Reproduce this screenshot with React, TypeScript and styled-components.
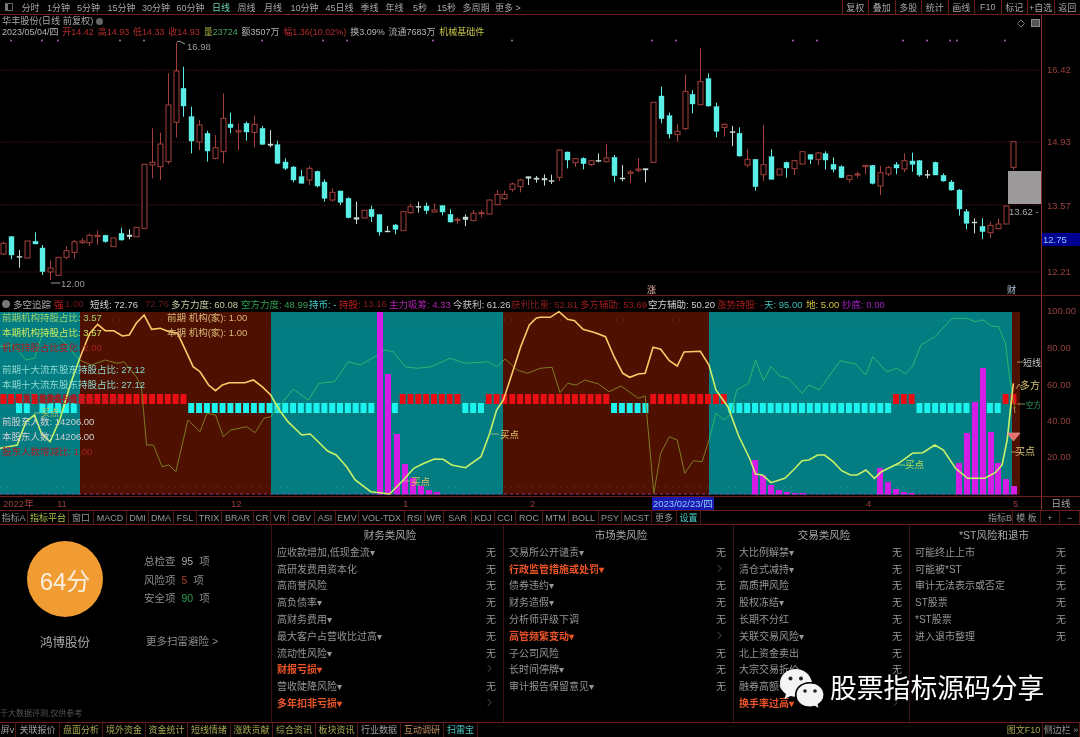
import React from 'react';
import styled, { createGlobalStyle } from 'styled-components';
import { ChevronRight } from 'lucide-react';

const GlobalStyle = createGlobalStyle`
    * {
        box-sizing: border-box;
    }
    html, body {
        margin: 0;
        padding: 0;
        background: #000;
    }
    body {
        font-family: "Liberation Sans", "Noto Sans CJK SC", sans-serif;
    }
`;

const LINE = '#6e1c1c';
const AXIS_TEXT = '#97403c';

const Page = styled.div`
    width: 1080px;
    height: 737px;
    position: relative;
    display: flex;
    flex-direction: column;
    overflow: hidden;
    background: #000;
    color: #b0b0b0;
    filter: blur(0.45px);
`;

const TopBar = styled.div`
    height: 15px;
    flex: none;
    display: flex;
    align-items: center;
    justify-content: space-between;
    border-bottom: 1px solid ${LINE};
`;

const TopGroup = styled.div`
    display: flex;
    align-items: center;
    height: 100%;
`;

const WindowIcon = styled.div`
    width: 8px;
    height: 8px;
    margin: 0 4px 0 5px;
    border: 1px solid #666;
    border-left: 3px solid #777;
`;

const TopItem = styled.div<{ $w: number; $color?: string }>`
    width: ${(p) => p.$w}px;
    text-align: center;
    font-size: 9px;
    color: ${(p) => p.$color || '#a6a6a6'};
    white-space: nowrap;
`;

const TopButton = styled.div`
    width: 26.5px;
    height: 100%;
    display: flex;
    align-items: center;
    justify-content: center;
    font-size: 9px;
    color: #a6a6a6;
    white-space: nowrap;
    border-left: 1px solid ${LINE};
`;

const PriceSection = styled.div`
    height: 281px;
    flex: none;
    display: flex;
    border-bottom: 1px solid ${LINE};
`;

const ChartPane = styled.div`
    position: relative;
    width: 1041px;
    flex: none;
`;

const ChartSvg = styled.svg`
    display: block;
`;

const QuoteInfo = styled.div`
    position: absolute;
    top: 0;
    left: 2px;
    font-size: 9px;
    line-height: 10px;
`;

const StockName = styled.div`
    display: flex;
    align-items: center;
    gap: 3px;
    height: 12px;
    font-size: 9.2px;
    color: #a8a8a8;
`;

const DropDot = styled.span`
    width: 7px;
    height: 7px;
    border-radius: 50%;
    background: #666;
`;

const QuoteLine = styled.div`
    display: flex;
    height: 10px;
    white-space: nowrap;
    gap: 3.8px;
`;

const Quote = styled.span<{ $color?: string }>`
    color: ${(p) => p.$color || '#b4b4b4'};
`;

const AxisColumn = styled.div`
    position: relative;
    flex: 1;
    border-left: 1px solid #88302e;
`;

const AxisTick = styled.div<{ $top: number }>`
    position: absolute;
    top: ${(p) => p.$top}px;
    left: 5px;
    font-size: 9.5px;
    line-height: 12px;
    color: ${AXIS_TEXT};
`;

const PriceTag = styled.div<{ $top: number }>`
    position: absolute;
    top: ${(p) => p.$top}px;
    left: 0;
    right: 0;
    height: 13px;
    background: #000090;
    color: #8cc8ff;
    font-size: 9.5px;
    line-height: 13px;
    padding-left: 1px;
`;

const IndicatorSection = styled.div`
    height: 200px;
    flex: none;
    display: flex;
`;

const IndicatorHeader = styled.div`
    height: 15px;
    display: flex;
    align-items: center;
    font-size: 9.5px;
    white-space: nowrap;
    padding-left: 2px;
`;

const HeaderIcon = styled.span`
    width: 8px;
    height: 8px;
    margin-right: 3px;
    border-radius: 50%;
    background: #777;
    flex: none;
`;

const HeaderStat = styled.span<{ $w: number; $color: string }>`
    width: ${(p) => p.$w}px;
    flex: none;
    color: ${(p) => p.$color};
`;

const LegendOverlay = styled.div<{ $left: number }>`
    position: absolute;
    top: 14px;
    left: ${(p) => p.$left}px;
    font-size: 9.5px;
    white-space: nowrap;
`;

const LegendLine = styled.div<{ $color: string; $gap?: number }>`
    height: 15px;
    line-height: 15px;
    margin-top: ${(p) => p.$gap || 0}px;
    color: ${(p) => p.$color};
`;

const TimeAxis = styled.div`
    height: 15px;
    flex: none;
    display: flex;
    border-top: 1px solid ${LINE};
    border-bottom: 1px solid ${LINE};
    font-size: 9.5px;
    line-height: 13px;
`;

const TimeTrack = styled.div`
    position: relative;
    width: 1041px;
    flex: none;
    color: ${AXIS_TEXT};
`;

const TimeMark = styled.span<{ $left: number }>`
    position: absolute;
    left: ${(p) => p.$left}px;
    top: 0;
`;

const CursorDate = styled(TimeMark)`
    background: #1a1ab0;
    color: #8cc8ff;
    height: 13px;
    padding: 0 1px;
`;

const PeriodCell = styled.div`
    flex: 1;
    text-align: center;
    color: #a6a6a6;
    border-left: 1px solid #88302e;
`;

const TabBar = styled.div<{ $h: number }>`
    height: ${(p) => p.$h}px;
    flex: none;
    display: flex;
    justify-content: space-between;
    font-size: 9px;
    line-height: ${(p) => p.$h}px;
    border-bottom: 1px solid ${LINE};
`;

const BottomTabBar = styled(TabBar)`
    border-bottom: none;
    border-top: 1px solid ${LINE};
`;

const TabGroup = styled.div`
    display: flex;
`;

const Tab = styled.div<{ $w: number; $color?: string }>`
    width: ${(p) => p.$w}px;
    flex: none;
    text-align: center;
    white-space: nowrap;
    overflow: hidden;
    color: ${(p) => p.$color || '#989898'};
    border-right: 1px solid #4f1616;
`;

const ScanPanel = styled.div`
    flex: 1;
    display: flex;
    min-height: 0;
`;

const SummaryPanel = styled.div`
    width: 272px;
    flex: none;
    display: flex;
    flex-direction: column;
    border-right: 1px solid #3a1212;
`;

const SummaryBody = styled.div`
    display: flex;
`;

const ScoreBlock = styled.div`
    width: 130px;
    flex: none;
    display: flex;
    flex-direction: column;
    align-items: center;
    padding-top: 16px;
`;

const ScoreCircle = styled.div`
    width: 76px;
    height: 76px;
    border-radius: 50%;
    background: #f09c32;
    color: #fbeedd;
    display: flex;
    align-items: center;
    justify-content: center;
    font-size: 24px;
`;

const ScoreName = styled.div`
    margin-top: 15px;
    font-size: 12.5px;
    color: #a8a8a8;
`;

const StatsBlock = styled.div`
    padding: 27px 0 0 14px;
    font-size: 10.5px;
    color: #8e8e8e;
`;

const StatRow = styled.div`
    display: flex;
    gap: 6px;
    height: 18.6px;
    line-height: 18px;
`;

const StatValue = styled.span<{ $color: string }>`
    color: ${(p) => p.$color};
`;

const MoreLink = styled.div`
    margin: 25px 0 0 2px;
    font-size: 10.5px;
    color: #8e8e8e;
`;

const Footnote = styled.div`
    margin-top: auto;
    margin-bottom: 3px;
    height: 11px;
    font-size: 8px;
    line-height: 11px;
    color: #555;
    white-space: nowrap;
`;

const RiskColumn = styled.div<{ $w: number; $last?: boolean }>`
    width: ${(p) => p.$w}px;
    flex: none;
    padding: 2px 0 0 5px;
    border-right: ${(p) => (p.$last ? 'none' : '1px solid #3a1212')};
`;

const RiskTitle = styled.div`
    height: 16px;
    line-height: 16px;
    text-align: center;
    font-size: 10.5px;
    color: #a8a8a8;
`;

const RiskRow = styled.div`
    height: 16.8px;
    display: flex;
    align-items: center;
    justify-content: space-between;
    padding-right: 7px;
    font-size: 10px;
    color: #969696;
    white-space: nowrap;
`;

const RiskName = styled.span<{ $hot?: boolean }>`
    color: ${(p) => (p.$hot ? '#ec5428' : '#969696')};
    font-weight: ${(p) => (p.$hot ? 700 : 400)};
`;

const Watermark = styled.div`
    position: absolute;
    left: 780px;
    top: 667px;
    display: flex;
    align-items: center;
    gap: 6px;
    color: #fff;
    font-size: 26.8px;
    line-height: 40px;
    white-space: nowrap;
    text-shadow: 0 0 4px #000, 0 0 4px #000;
`;

const WatermarkText = styled.span`
    padding-top: 2px;
`;

type Candle = [string, number, number, number, number];

// kind, high, body top, body bottom, low: measured on a 3x crop, y = v / 3 + 40
const candles: Candle[] = [
    ['r', 605, 610, 642, 645], ['c', 588, 590, 645, 658], ['w', 630, 649, 651, 683], ['r', 603, 603, 654, 654],
    ['c', 577, 604, 612, 612], ['c', 615, 624, 695, 705], ['r', 662, 684, 696, 720], ['r', 652, 652, 706, 706],
    ['r', 618, 632, 652, 658], ['r', 600, 605, 637, 655], ['r', 595, 603, 608, 612], ['r', 580, 586, 608, 618],
    ['r', 572, 586, 590, 615], ['c', 584, 586, 605, 608], ['r', 594, 594, 620, 620], ['c', 563, 580, 600, 602],
    ['w', 568, 585, 590, 598], ['r', 562, 562, 590, 590], ['r', 373, 373, 565, 565], ['r', 265, 367, 375, 415],
    ['r', 278, 312, 380, 420], ['r', 100, 195, 365, 372], ['r', 8, 93, 247, 292], ['c', 80, 145, 198, 230],
    ['c', 200, 230, 303, 340], ['r', 240, 255, 306, 330], ['c', 272, 280, 333, 365], ['r', 285, 323, 355, 358],
    ['r', 160, 235, 335, 370], ['c', 218, 252, 263, 280], ['r', 250, 272, 276, 330], ['c', 245, 250, 276, 302],
    ['r', 226, 253, 277, 322], ['c', 258, 265, 313, 315], ['w', 270, 312, 316, 322], ['c', 302, 314, 370, 372],
    ['c', 355, 366, 385, 390], ['c', 378, 381, 420, 427], ['c', 390, 410, 430, 430], ['r', 378, 385, 420, 435],
    ['c', 392, 394, 438, 442], ['c', 418, 426, 475, 485], ['r', 445, 457, 480, 485], ['c', 452, 453, 487, 495],
    ['c', 472, 475, 533, 535], ['w', 485, 533, 538, 552], ['r', 511, 511, 534, 534], ['c', 497, 508, 530, 546],
    ['c', 522, 524, 576, 587], ['w', 558, 573, 575, 575], ['c', 552, 555, 568, 583], ['r', 515, 515, 572, 572],
    ['r', 492, 500, 518, 522], ['w', 485, 499, 502, 518], ['c', 488, 498, 512, 522], ['r', 490, 510, 516, 518],
    ['c', 495, 497, 516, 526], ['c', 508, 523, 546, 548], ['r', 532, 538, 540, 552], ['w', 523, 531, 539, 558],
    ['r', 510, 520, 542, 542], ['r', 510, 518, 521, 532], ['r', 480, 480, 522, 522], ['r', 450, 463, 494, 495],
    ['r', 452, 463, 476, 480], ['r', 428, 432, 448, 455], ['r', 416, 420, 440, 457], ['w', 410, 410, 415, 435],
    ['w', 408, 414, 418, 428], ['w', 403, 415, 420, 437], ['w', 404, 422, 425, 432], ['r', 328, 330, 412, 423],
    ['c', 335, 336, 360, 385], ['r', 354, 356, 368, 380], ['c', 352, 355, 371, 388], ['r', 360, 362, 374, 378],
    ['w', 340, 361, 363, 367], ['r', 312, 354, 365, 367], ['c', 345, 352, 407, 426], ['w', 375, 414, 417, 424],
    ['r', 390, 396, 400, 430], ['r', 354, 387, 391, 397], ['w', 385, 386, 390, 427], ['r', 187, 187, 367, 367],
    ['c', 140, 168, 236, 250], ['c', 218, 227, 282, 295], ['r', 252, 274, 284, 305], ['r', 103, 154, 266, 270],
    ['c', 150, 163, 192, 220], ['r', 25, 125, 194, 195], ['c', 100, 116, 198, 200], ['c', 188, 200, 274, 292],
    ['r', 250, 253, 262, 290], ['w', 258, 275, 278, 318], ['c', 262, 280, 348, 350], ['r', 328, 358, 375, 382],
    ['c', 358, 358, 440, 452], ['r', 255, 374, 404, 423], ['c', 328, 350, 418, 418], ['r', 387, 387, 405, 405],
    ['c', 365, 367, 384, 413], ['r', 360, 362, 386, 405], ['r', 335, 335, 372, 372], ['c', 342, 344, 358, 372],
    ['r', 335, 339, 358, 375], ['c', 334, 341, 360, 388], ['c', 352, 373, 388, 397], ['c', 376, 380, 413, 415],
    ['r', 405, 407, 418, 428], ['r', 395, 402, 405, 413], ['r', 375, 376, 380, 403], ['c', 375, 376, 430, 433],
    ['r', 378, 398, 438, 465], ['r', 378, 383, 402, 408], ['c', 366, 374, 384, 403], ['r', 340, 362, 387, 396],
    ['c', 338, 363, 373, 395], ['c', 360, 362, 405, 410], ['w', 390, 403, 405, 415], ['c', 365, 367, 405, 405],
    ['c', 400, 406, 423, 425], ['c', 420, 426, 450, 452], ['c', 447, 450, 507, 527], ['c', 507, 515, 550, 568],
    ['w', 535, 546, 549, 580], ['c', 535, 559, 575, 597], ['r', 545, 556, 578, 593], ['r', 535, 552, 566, 568],
    ['r', 498, 498, 552, 552], ['r', 305, 305, 382, 390],
];

const candleX = (i: number) => 3.33 + 7.83 * i;
const WICK = { r: '#a5403c', c: '#5aeee6', w: '#c8dcd6' } as Record<string, string>;

const signalDots = [11, 42, 58, 120, 144, 262, 323, 347, 433, 512, 652, 676, 793, 817, 903, 927, 950, 957, 1005];
const gridLevels = [70, 142, 205, 272];

const PriceChart: React.FC = () => (
    <ChartSvg width={1041} height={280} viewBox="0 15 1041 280">
        {gridLevels.map((y) => (
            <line key={y} x1={0} x2={1041} y1={y} y2={y} stroke="#3a1214" strokeDasharray="2 1" />
        ))}
        {signalDots.map((x) => (
            <circle key={x} cx={x} cy={40.5} r={1} fill="#b060b8" />
        ))}
        {candles.map(([kind, high, top, bottom, low], i) => {
            const x = Math.round(candleX(i)) + 0.5;
            const y1 = top / 3 + 40;
            const y2 = bottom / 3 + 40;
            const solid = kind !== 'r';
            return (
                <g key={i}>
                    <line x1={x} x2={x} y1={high / 3 + 40} y2={low / 3 + 40} stroke={WICK[kind]} />
                    <rect
                        x={x - 2.5}
                        y={y1}
                        width={5}
                        height={Math.max(y2 - y1, 1)}
                        fill={solid ? WICK[kind] : '#000'}
                        stroke={WICK[kind]}
                        strokeWidth={kind === 'r' ? 1 : 0.4}
                    />
                </g>
            );
        })}
        <path d="M177 42l2-1 6 3" fill="none" stroke="#999" />
        <text x={187} y={50} fontSize={9.5} fill="#9a9a9a">16.98</text>
        <path d="M51 283h9" fill="none" stroke="#999" />
        <text x={61} y={287} fontSize={9.5} fill="#9a9a9a">12.00</text>
        <rect x={1008} y={171} width={33} height={33} fill="#9c9a9a" />
        <text x={1009} y={215} fontSize={9.5} fill="#a8a8a8">13.62 -</text>
        <path d="M1021 20l3.5 3.5-3.5 3.500-3.500-3.500z" fill="none" stroke="#777" />
        <rect x={1031.500} y={19.500} width={8} height={7} fill="#555" stroke="#888" />
        <text x={647} y={293} fontSize={9} fill="#e8b0a8">涨</text>
        <text x={1007} y={293} fontSize={9} fill="#b8c8e0">财</text>
    </ChartSvg>
);

const sections: [number, number, string][] = [
    [0, 80, '#037c82'],
    [80, 271, '#4e1000'],
    [271, 503, '#037c82'],
    [503, 709, '#4e1000'],
    [709, 1012, '#037c82'],
    [1012, 1020, '#4e1000'],
];

const redRanges: [number, number][] = [[1, 78], [80, 186], [401, 461], [487, 609], [650, 727], [893, 916], [1004, 1017]];
const cyanRanges: [number, number][] = [[17, 29], [41, 77], [189, 375], [393, 399], [463, 484], [612, 649], [729, 892], [918, 971], [987, 1002]];

const inRanges = (x: number, ranges: [number, number][]) => ranges.some(([a, b]) => x >= a - 1 && x <= b + 1);

// traced from crops that are 2.9x wide and 3x high
const trace = (left: number[], right: number[]) => {
    const out: string[] = [];
    for (let i = 0; i < left.length; i += 2) out.push(`${(left[i] / 2.9).toFixed(1)},${(left[i + 1] / 3 + 290).toFixed(1)}`);
    for (let i = 0; i < right.length; i += 2) out.push(`${(540 + right[i] / 2.9).toFixed(1)},${(right[i + 1] / 3 + 290).toFixed(1)}`);
    return out.join(' ');
};

const shortLine = trace(
    [0, 475, 50, 465, 75, 395, 100, 375, 120, 430, 145, 455, 175, 385, 205, 280, 235, 195, 260, 130, 283, 103, 305, 122, 330, 122, 355, 138, 375, 135, 395, 100, 418, 75, 440, 118, 465, 115, 490, 125, 515, 130, 540, 185, 560, 230, 580, 245, 605, 285, 625, 302, 645, 285, 665, 278, 710, 278, 735, 270, 760, 290, 785, 315, 810, 360, 835, 395, 875, 435, 900, 432, 950, 483, 975, 495, 1005, 530, 1030, 570, 1075, 605, 1130, 612, 1170, 570, 1200, 535, 1230, 520, 1260, 507, 1285, 508, 1310, 525, 1350, 533, 1395, 500, 1420, 430, 1440, 360, 1460, 330, 1490, 235, 1510, 170, 1535, 105, 1555, 85],
    [0, 82, 30, 82, 55, 65, 80, 88, 100, 92, 125, 118, 160, 128, 190, 140, 215, 200, 240, 250, 260, 262, 285, 252, 305, 250, 328, 172, 350, 178, 375, 212, 398, 228, 418, 186, 465, 184, 490, 225, 510, 300, 545, 350, 575, 435, 610, 510, 625, 552, 645, 555, 670, 578, 710, 565, 735, 540, 760, 512, 780, 510, 805, 495, 825, 495, 850, 515, 875, 542, 900, 555, 920, 555, 945, 540, 970, 565, 990, 545, 1040, 520, 1080, 490, 1110, 488, 1145, 465, 1170, 480, 1205, 535, 1240, 565, 1290, 565, 1320, 548, 1340, 525, 1355, 450, 1365, 350, 1373, 280]
);

const bearLine = trace(
    [0, 170, 40, 165, 75, 210, 100, 205, 120, 140, 150, 125, 185, 155, 230, 210, 265, 225, 305, 210, 340, 220, 360, 215, 395, 260, 410, 290, 425, 465, 445, 465, 470, 530, 490, 525, 510, 545, 545, 390, 580, 425, 600, 370, 625, 375, 648, 440, 670, 420, 715, 410, 740, 428, 765, 385, 785, 380, 820, 335, 850, 298, 895, 330, 925, 280, 970, 275, 1010, 215, 1045, 225, 1095, 195, 1115, 180, 1140, 185, 1175, 230, 1210, 235, 1250, 230, 1305, 205, 1350, 220, 1415, 215, 1440, 230, 1465, 207, 1500, 240, 1530, 250],
    [0, 235, 35, 232, 58, 308, 80, 280, 105, 285, 130, 270, 170, 282, 200, 305, 235, 288, 285, 325, 305, 318, 330, 610, 350, 490, 375, 440, 398, 450, 420, 550, 445, 512, 470, 515, 490, 450, 510, 370, 535, 390, 555, 370, 570, 300, 605, 280, 625, 210, 648, 272, 670, 230, 695, 258, 720, 265, 760, 310, 780, 285, 810, 300, 870, 212, 915, 222, 945, 255, 965, 200, 1005, 245, 1035, 235, 1060, 252, 1080, 230, 1105, 165, 1145, 140, 1195, 85, 1240, 85, 1260, 95, 1285, 90, 1310, 108, 1330, 110, 1350, 160, 1360, 250, 1373, 330, 1378, 355]
);

const bars: [number, number][] = [
    [377, 312], [385, 374], [394, 434], [402, 464], [410, 478], [418, 486], [426, 490], [434, 492],
    [752, 460], [760, 475], [768, 485], [776, 490], [784, 492], [792, 493], [800, 493],
    [877, 468], [885, 482], [893, 489], [901, 492], [909, 493],
    [956, 463], [964, 433], [972, 402], [980, 368], [988, 432], [995, 463], [1003, 479], [1011, 486],
];

const gradientStops = (inTeal: string, inRed: string) =>
    sections.flatMap(([a, b, fill], i) => {
        const color = fill === '#037c82' ? inTeal : inRed;
        return [
            <stop key={`a${i}`} offset={a / 1041} stopColor={color} />,
            <stop key={`b${i}`} offset={b / 1041} stopColor={color} />,
        ];
    });

const IndicatorChart: React.FC = () => (
    <ChartSvg width={1041} height={185} viewBox="0 311 1041 185">
        <defs>
            <linearGradient id="shortStroke" gradientUnits="userSpaceOnUse" x1={0} x2={1041} y1={0} y2={0}>
                {gradientStops('#c8f268', '#ffc868')}
            </linearGradient>
            <linearGradient id="bearStroke" gradientUnits="userSpaceOnUse" x1={0} x2={1041} y1={0} y2={0}>
                {gradientStops('#26b870', '#7c7a22')}
            </linearGradient>
        </defs>
        {sections.map(([a, b, fill]) => (
            <rect key={a} x={a} y={312} width={b - a} height={182.500} fill={fill} />
        ))}
        <line x1={0} x2={1012} y1={320} y2={320} stroke="#ffffff" strokeOpacity={0.18} strokeDasharray="1 6" />
        <line x1={0} x2={1012} y1={487} y2={487} stroke="#ffffff" strokeOpacity={0.18} strokeDasharray="1 6" />
        <line x1={0} x2={1012} y1={494} y2={494} stroke="#c040c0" strokeOpacity={0.7} strokeDasharray="3 3" />
        {Array.from({ length: 131 }, (_, i) => {
            const x = candleX(i);
            const red = inRanges(x, redRanges);
            const cyan = !red && inRanges(x, cyanRanges);
            const showCyan = cyan || inRanges(x, cyanRanges.slice(0, 2));
            // the first stretch is half hidden behind a legend line
            const dim = x > 20 && x < 78 && Math.abs(x - 35) > 4;
            return (
                <g key={i}>
                    {red && <rect x={x - 3} y={394} width={6} height={10} rx={dim ? 2 : 0} fill={dim ? '#8a2a30' : '#e80e14'} />}
                    {showCyan && <rect x={x - 3} y={403} width={6} height={10} fill="#1cf2ee" />}
                </g>
            );
        })}
        <polyline points={bearLine} fill="none" stroke="url(#bearStroke)" strokeWidth={1} />
        {bars.map(([x, top]) => (
            <rect key={x} x={x} y={top} width={6} height={494.500 - top} fill="#d41ee6" />
        ))}
        <polyline points={shortLine} fill="none" stroke="url(#shortStroke)" strokeWidth={1.6} />
        <path d="M1007 433h13l-6.500 8z" fill="#e8706c" stroke="#f0b0b0" strokeWidth={0.6} />
        <path d="M1017 362h6M1016 389l3-5 3 5M1014 407l1 6M1017 404h8M1011 452h5M491 434h8M402 481h8M34 413h6" fill="none" stroke="#c8c878" strokeWidth={0.7} />
        <path d="M896 465h9" fill="none" stroke="#c8f268" strokeWidth={0.7} />
        <text x={1023} y={366} fontSize={9} fill="#c8c8c8">短线</text>
        <text x={1020} y={389} fontSize={10} fill="#d8c070">多方</text>
        <text x={1026} y={408} fontSize={7.500} fill="#30a060">空方</text>
        <text x={1015} y={455} fontSize={10} fill="#d8c070">买点</text>
        <text x={905} y={468} fontSize={9.5} fill="#b8d860">买点</text>
        <text x={500} y={438} fontSize={9.5} fill="#d8c060">买点</text>
        <text x={411} y={485} fontSize={9.5} fill="#d8c060">买点</text>
        <text x={41} y={416} fontSize={9} fill="#b8c860">买点</text>
    </ChartSvg>
);

const topItems: [string, number, string?][] = [
    ['分时', 27], ['1分钟', 29], ['5分钟', 31], ['15分钟', 35], ['30分钟', 34], ['60分钟', 35], ['日线', 26, '#6fd0b8'],
    ['周线', 25], ['月线', 28], ['10分钟', 35], ['45日线', 35], ['季线', 25], ['年线', 25], ['5秒', 26], ['15秒', 27],
    ['多周期', 32], ['更多 >', 32],
];
const topButtons = ['复权', '叠加', '多股', '统计', '画线', 'F10', '标记', '+自选', '返回'];

const headerStats: [string, number, string][] = [
    ['多空追踪', 41, '#a8a8a8'], ['强', 11, '#d02020'], ['1.00', 25, '#701818'], ['短线: 72.76', 55, '#d0d0d0'], ['72.76', 26, '#6a1c1c'],
    ['多方力度: 60.08', 70, '#c8c8a0'], ['空方力度: 48.99', 68, '#30a050'], ['持币: -', 30, '#40d0d0'], ['持股:', 24, '#c02020'],
    ['13.16', 26, '#8c1c1c'], ['主力吸筹: 4.33', 64, '#b020b0'], ['今获利: 61.26', 58, '#c8c8c8'], ['获利比重: 52.81', 69, '#8c1c1c'],
    ['多方辅助: 53.69', 68, '#a01c1c'], ['空方辅助: 50.20', 69, '#d0d0d0'], ['涨势持股: -', 47, '#a81c1c'], ['天: 95.00', 42, '#40c0b8'],
    ['地: 5.00', 36, '#d0c040'], ['抄底: 0.00', 46, '#a020c0'],
];

const legendLeft: [string, string, number?][] = [
    ['前期机构持股占比: 3.57', '#9cd070'],
    ['本期机构持股占比: 3.57', '#c8e860'],
    ['机构持股占比变化: 2.00', '#a82020'],
    ['前期十大流东股东持股占比: 27.12', '#8cd8d0', 7],
    ['本期十大流东股东持股占比: 27.12', '#8cd8d0'],
    ['十大流东股东占比变化: 0.00', '#a82020'],
    ['前股东人数: 14206.00', '#d0d0d0', 7],
    ['本股东人数: 14206.00', '#d0d0d0'],
    ['股东人数增减比: 1.00', '#a82020'],
];

const indicatorTabs: [string, number, string?][] = [
    ['指标A', 28], ['指标平台', 41, '#b0c050'], ['窗口', 25], ['MACD', 33], ['DMI', 22], ['DMA', 25], ['FSL', 23], ['TRIX', 25], ['BRAR', 32],
    ['CR', 17], ['VR', 18], ['OBV', 26], ['ASI', 21], ['EMV', 23], ['VOL-TDX', 46], ['RSI', 20], ['WR', 19], ['SAR', 28], ['KDJ', 23], ['CCI', 21],
    ['ROC', 27], ['MTM', 26], ['BOLL', 30], ['PSY', 23], ['MCST', 30], ['更多', 25], ['设置', 24, '#50d0c8'],
];
const indicatorTabsRight: [string, number][] = [['指标B', 25], ['模 板', 28], ['+', 19], ['−', 20]];

const bottomTabs: [string, number, string?][] = [
    ['屏v', 16, '#a0a0a0'], ['关联报价', 44, '#a0a0a0'], ['盘面分析', 43, '#a8a850'], ['境外资金', 43, '#a8a850'], ['资金统计', 42, '#a8a850'],
    ['短线情绪', 43, '#a8a850'], ['涨跌贡献', 42, '#a8a850'], ['综合资讯', 43, '#a8a850'], ['板块资讯', 42, '#a8a850'], ['行业数据', 43, '#a0a0a0'],
    ['互动调研', 43, '#c09060'], ['扫雷宝', 34, '#50d0c8'],
];

// name, flagged as a risk, value hidden behind the watermark
type Risk = [string, boolean?, boolean?];
const riskColumns: { title: string; width: number; items: Risk[] }[] = [
    {
        title: '财务类风险',
        width: 232,
        items: [
            ['应收款增加,低现金流▾'], ['高研发费用资本化'], ['高商誉风险'], ['高负债率▾'], ['高财务费用▾'],
            ['最大客户占营收比过高▾'], ['流动性风险▾'], ['财报亏损▾', true], ['营收陡降风险▾'], ['多年扣非亏损▾', true],
        ],
    },
    {
        title: '市场类风险',
        width: 230,
        items: [
            ['交易所公开谴责▾'], ['行政监管措施或处罚▾', true], ['债券违约▾'], ['财务造假▾'], ['分析师评级下调'],
            ['高管频繁变动▾', true], ['子公司风险'], ['长时间停牌▾'], ['审计报告保留意见▾'],
        ],
    },
    {
        title: '交易类风险',
        width: 176,
        items: [
            ['大比例解禁▾'], ['清仓式减持▾'], ['高质押风险'], ['股权冻结▾'], ['长期不分红'],
            ['关联交易风险▾'], ['北上资金卖出'], ['大宗交易折价'], ['融券高额▾', false, true], ['换手率过高▾', true],
        ],
    },
    {
        title: '*ST风险和退市',
        width: 163,
        items: [['可能终止上市'], ['可能被*ST'], ['审计无法表示或否定'], ['ST股票'], ['*ST股票'], ['进入退市整理']],
    },
];

const App: React.FC = () => (
    <Page>
        <GlobalStyle />
        <TopBar>
            <TopGroup>
                <WindowIcon />
                {topItems.map(([label, w, color]) => (
                    <TopItem key={label} $w={w} $color={color}>{label}</TopItem>
                ))}
            </TopGroup>
            <TopGroup>
                {topButtons.map((label) => (
                    <TopButton key={label}>{label}</TopButton>
                ))}
            </TopGroup>
        </TopBar>

        <PriceSection>
            <ChartPane>
                <PriceChart />
                <QuoteInfo>
                    <StockName>华丰股份(日线 前复权) <DropDot /></StockName>
                    <QuoteLine>
                        <Quote>2023/05/04/四</Quote>
                        <Quote $color="#b02a2a">开14.42</Quote>
                        <Quote $color="#b02a2a">高14.93</Quote>
                        <Quote $color="#b02a2a">低14.33</Quote>
                        <Quote $color="#b02a2a">收14.93</Quote>
                        <Quote $color="#a0a840">量<Quote $color="#48a068">23724</Quote></Quote>
                        <Quote>额3507万</Quote>
                        <Quote $color="#b02a2a">幅1.36(10.02%)</Quote>
                        <Quote>换3.09%</Quote>
                        <Quote>流通7683万</Quote>
                        <Quote $color="#c8c850">机械基础件</Quote>
                    </QuoteLine>
                </QuoteInfo>
            </ChartPane>
            <AxisColumn>
                <AxisTick $top={49}>16.42</AxisTick>
                <AxisTick $top={121}>14.93</AxisTick>
                <AxisTick $top={185}>13.57</AxisTick>
                <PriceTag $top={218}>12.75</PriceTag>
                <AxisTick $top={251}>12.21</AxisTick>
            </AxisColumn>
        </PriceSection>

        <IndicatorSection>
            <ChartPane>
                <IndicatorHeader>
                    <HeaderIcon />
                    {headerStats.map(([label, w, color]) => (
                        <HeaderStat key={label} $w={w} $color={color}>{label}</HeaderStat>
                    ))}
                </IndicatorHeader>
                <IndicatorChart />
                <LegendOverlay $left={2}>
                    {legendLeft.map(([label, color, gap]) => (
                        <LegendLine key={label} $color={color} $gap={gap}>{label}</LegendLine>
                    ))}
                </LegendOverlay>
                <LegendOverlay $left={167}>
                    <LegendLine $color="#d8b878">前期 机构(家): 1.00</LegendLine>
                    <LegendLine $color="#d8b878">本期 机构(家): 1.00</LegendLine>
                </LegendOverlay>
            </ChartPane>
            <AxisColumn>
                <AxisTick $top={9}>100.00</AxisTick>
                <AxisTick $top={46}>80.00</AxisTick>
                <AxisTick $top={83}>60.00</AxisTick>
                <AxisTick $top={119}>40.00</AxisTick>
                <AxisTick $top={155}>20.00</AxisTick>
            </AxisColumn>
        </IndicatorSection>

        <TimeAxis>
            <TimeTrack>
                <TimeMark $left={3}>2022年</TimeMark>
                <TimeMark $left={57}>11</TimeMark>
                <TimeMark $left={231}>12</TimeMark>
                <TimeMark $left={403}>1</TimeMark>
                <TimeMark $left={530}>2</TimeMark>
                <CursorDate $left={652}>2023/02/23/四</CursorDate>
                <TimeMark $left={866}>4</TimeMark>
                <TimeMark $left={1013}>5</TimeMark>
            </TimeTrack>
            <PeriodCell>日线</PeriodCell>
        </TimeAxis>

        <TabBar $h={14}>
            <TabGroup>
                {indicatorTabs.map(([label, w, color]) => (
                    <Tab key={label} $w={w} $color={color}>{label}</Tab>
                ))}
            </TabGroup>
            <TabGroup>
                {indicatorTabsRight.map(([label, w]) => (
                    <Tab key={label} $w={w}>{label}</Tab>
                ))}
            </TabGroup>
        </TabBar>

        <ScanPanel>
            <SummaryPanel>
                <SummaryBody>
                    <ScoreBlock>
                        <ScoreCircle>64分</ScoreCircle>
                        <ScoreName>鸿博股份</ScoreName>
                    </ScoreBlock>
                    <StatsBlock>
                        <StatRow>总检查 <StatValue $color="#a8a8a8">95</StatValue> 项</StatRow>
                        <StatRow>风险项 <StatValue $color="#b04030">5</StatValue> 项</StatRow>
                        <StatRow>安全项 <StatValue $color="#28a050">90</StatValue> 项</StatRow>
                        <MoreLink>更多扫雷避险 &gt;</MoreLink>
                    </StatsBlock>
                </SummaryBody>
                <Footnote>于大数据评测,仅供参考</Footnote>
            </SummaryPanel>
            {riskColumns.map((col, idx) => (
                <RiskColumn key={col.title} $w={col.width} $last={idx === riskColumns.length - 1}>
                    <RiskTitle>{col.title}</RiskTitle>
                    {col.items.map(([name, hot, noValue]) => (
                        <RiskRow key={name}>
                            <RiskName $hot={hot}>{name}</RiskName>
                            {hot ? <ChevronRight size={13} strokeWidth={1} /> : !noValue && <span>无</span>}
                        </RiskRow>
                    ))}
                </RiskColumn>
            ))}
        </ScanPanel>

        <BottomTabBar $h={15}>
            <TabGroup>
                {bottomTabs.map(([label, w, color]) => (
                    <Tab key={label} $w={w} $color={color}>{label}</Tab>
                ))}
            </TabGroup>
            <TabGroup>
                <Tab $w={38} $color="#a8a850">图文F10</Tab>
                <Tab $w={37}>侧边栏 »</Tab>
            </TabGroup>
        </BottomTabBar>

        <Watermark>
            <svg width={44} height={40} viewBox="0 0 44 40">
                <path d="M16 1C7 1 0 7 0 15c0 5 2.500 8.500 6 11l-1.500 5 6-3c1.500.4 3 .6 4.500.7C14 20 21 13 32 14 30 6 23.500 1 16 1z" fill="#f4f4f4" />
                <circle cx={10.500} cy={10.500} r={2} fill="#222" />
                <circle cx={21} cy={10.500} r={2} fill="#222" />
                <path d="M30 15c-8 0-14 5-14 12s6 12 14 12c1.600 0 3-.3 4.500-.7l5 2.700-1.300-4.500c3.500-2.300 5.800-5.500 5.800-9.500 0-7-6-12-14-12z" fill="#f4f4f4" stroke="#000" strokeWidth={1.200} />
                <circle cx={25} cy={23} r={1.800} fill="#222" />
                <circle cx={35} cy={23} r={1.800} fill="#222" />
            </svg>
            <WatermarkText>股票指标源码分享</WatermarkText>
        </Watermark>
    </Page>
);

export default App;
